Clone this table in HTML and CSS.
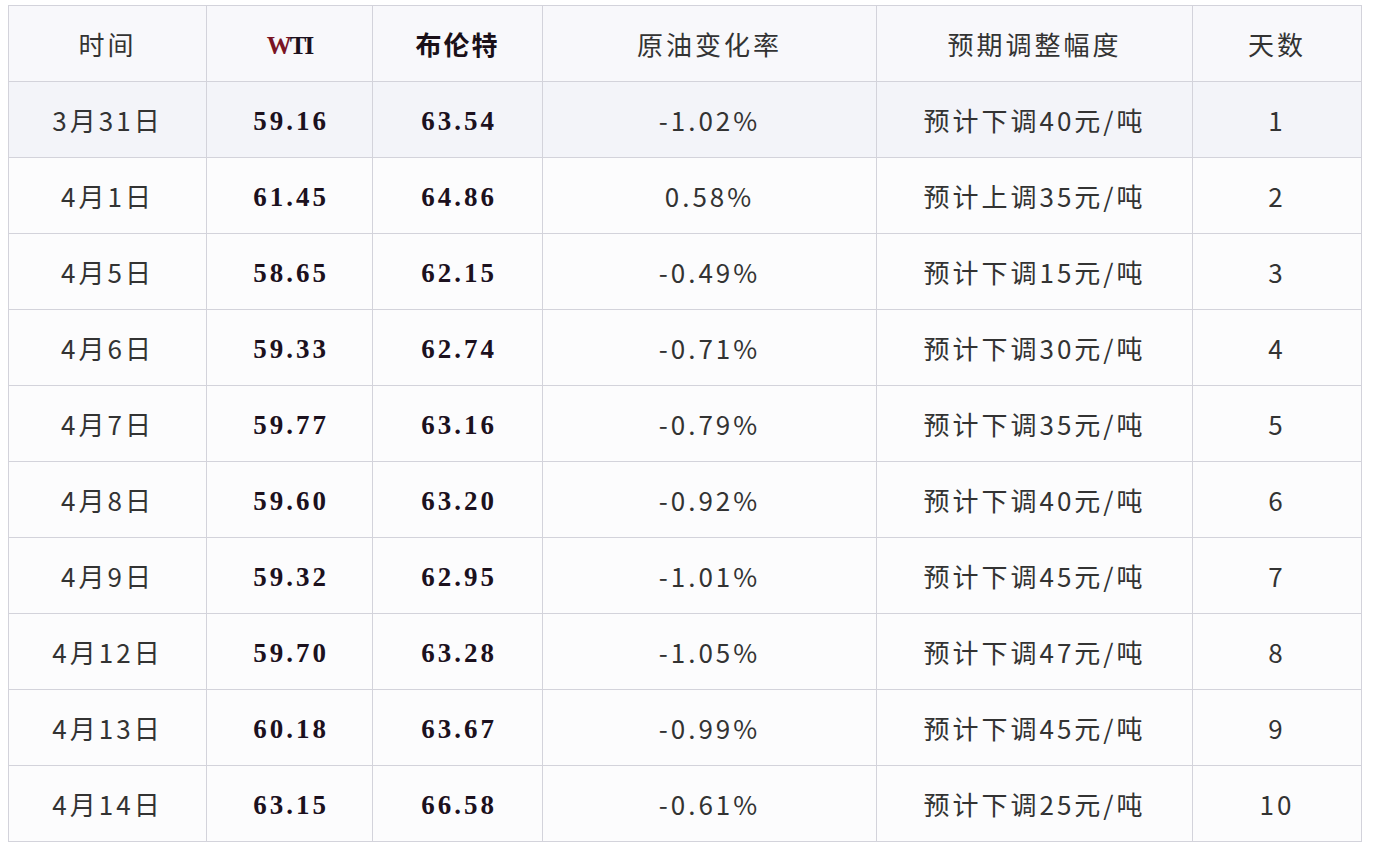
FILE: index.html
```html
<!DOCTYPE html>
<html lang="zh">
<head>
<meta charset="utf-8">
<link rel="stylesheet" href="styles.css">
</head>
<body>
<table class="oil">
  <colgroup>
    <col class="c1"><col class="c2"><col class="c3"><col class="c4"><col class="c5"><col class="c6">
  </colgroup>
  <thead>
    <tr>
      <th>时间</th>
      <th class="wti"><span class="w">W</span>TI</th>
      <th class="bold">布伦特</th>
      <th>原油变化率</th>
      <th>预期调整幅度</th>
      <th>天数</th>
    </tr>
  </thead>
  <tbody>
    <tr class="hl"><td>3月31日</td><td class="num">59.16</td><td class="num">63.54</td><td>-1.02%</td><td>预计下调40元/吨</td><td>1</td></tr>
    <tr><td>4月1日</td><td class="num">61.45</td><td class="num">64.86</td><td>0.58%</td><td>预计上调35元/吨</td><td>2</td></tr>
    <tr><td>4月5日</td><td class="num">58.65</td><td class="num">62.15</td><td>-0.49%</td><td>预计下调15元/吨</td><td>3</td></tr>
    <tr><td>4月6日</td><td class="num">59.33</td><td class="num">62.74</td><td>-0.71%</td><td>预计下调30元/吨</td><td>4</td></tr>
    <tr><td>4月7日</td><td class="num">59.77</td><td class="num">63.16</td><td>-0.79%</td><td>预计下调35元/吨</td><td>5</td></tr>
    <tr><td>4月8日</td><td class="num">59.60</td><td class="num">63.20</td><td>-0.92%</td><td>预计下调40元/吨</td><td>6</td></tr>
    <tr><td>4月9日</td><td class="num">59.32</td><td class="num">62.95</td><td>-1.01%</td><td>预计下调45元/吨</td><td>7</td></tr>
    <tr><td>4月12日</td><td class="num">59.70</td><td class="num">63.28</td><td>-1.05%</td><td>预计下调47元/吨</td><td>8</td></tr>
    <tr><td>4月13日</td><td class="num">60.18</td><td class="num">63.67</td><td>-0.99%</td><td>预计下调45元/吨</td><td>9</td></tr>
    <tr><td>4月14日</td><td class="num">63.15</td><td class="num">66.58</td><td>-0.61%</td><td>预计下调25元/吨</td><td>10</td></tr>
  </tbody>
</table>
</body>
</html>
```

FILE: styles.css
```css
html, body {
  margin: 0;
  padding: 0;
  background: #ffffff;
}
body {
  padding: 5px 0 0 8px;
}
.oil {
  border-collapse: collapse;
  table-layout: fixed;
  width: 1353px;
  font-family: "Noto Sans CJK SC", "Noto Sans", sans-serif;
  font-size: 26px;
  color: #333333;
  background: #fcfcfd;
}
.c1 { width: 198px; }
.c2 { width: 166px; }
.c3 { width: 170px; }
.c4 { width: 334px; }
.c5 { width: 316px; }
.c6 { width: 169px; }
.oil th, .oil td {
  border: 1px solid #d3d3db;
  height: 75px;
  padding: 0;
  text-align: center;
  vertical-align: middle;
  font-weight: 400;
  letter-spacing: 3px;
  line-height: 1;
}
.oil thead tr {
  background: #f8f8fb;
}
.oil tr.hl {
  background: #f3f4f9;
}
.oil .bold {
  font-weight: 700;
  color: #1a1018;
  letter-spacing: 2px;
}
.oil td.num {
  font-family: "Liberation Serif", "DejaVu Serif", serif;
  font-weight: 700;
  font-size: 27px;
  letter-spacing: 3px;
  height: 71px;
  padding-top: 4px;
  padding-left: 3px;
  color: #1c111e;
}
.oil th.wti {
  font-family: "Liberation Serif", "DejaVu Serif", serif;
  font-weight: 700;
  font-size: 25px;
  letter-spacing: -2px;
  height: 72px;
  padding-top: 3px;
  color: #1c111e;
}
.oil .w {
  color: #7a1424;
}
```
